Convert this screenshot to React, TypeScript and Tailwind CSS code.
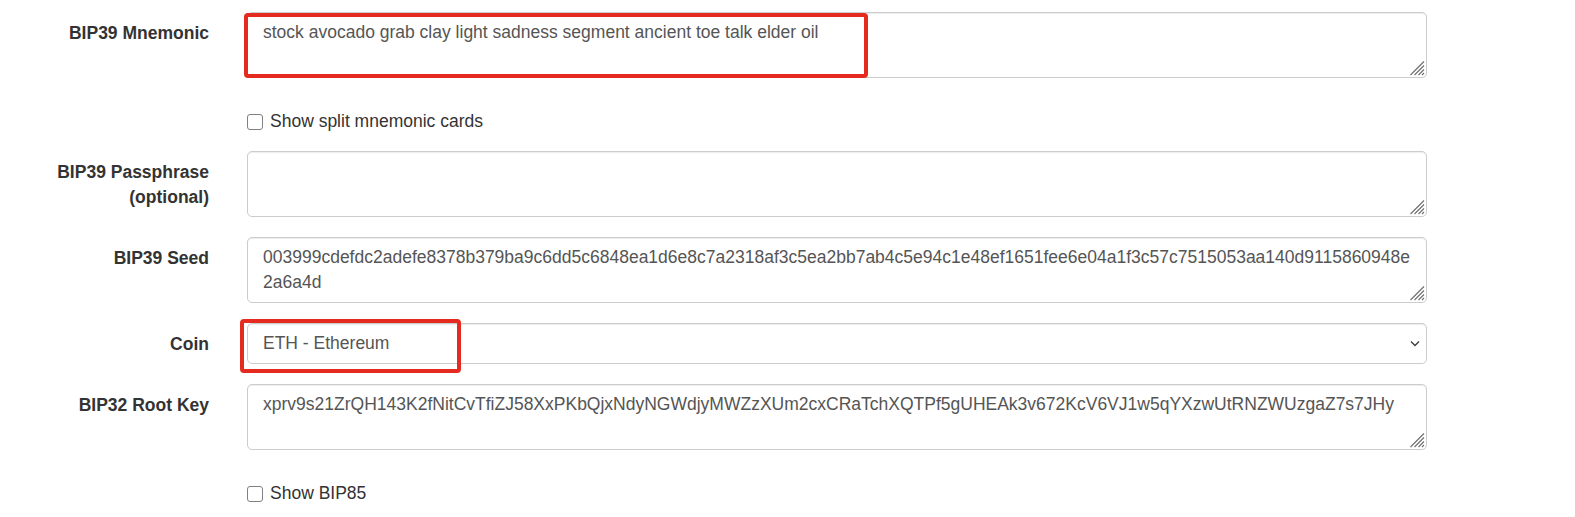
import React from 'react';

const FONT = { fontFamily: '"Liberation Sans", Arial, Helvetica, sans-serif' };

const SEED =
  '003999cdefdc2adefe8378b379ba9c6dd5c6848ea1d6e8c7a2318af3c5ea2bb7ab4c5e94c1e48ef1651fee6e04a1f3c57c7515053aa140d9115860948e2a6a4d';
const ROOT_KEY =
  'xprv9s21ZrQH143K2fNitCvTfiZJ58XxPKbQjxNdyNGWdjyMWZzXUm2cxCRaTchXQTPf5gUHEAk3v672KcV6VJ1w5qYXzwUtRNZWUzgaZ7s7JHy';

const fieldClass =
  'block w-full h-[66px] rounded-[5px] border border-[#ccc] bg-white pl-[15px] pr-[13px] py-[7px] text-[17.5px] leading-[25px] text-[#555] shadow-[inset_0_1px_1px_rgba(0,0,0,0.075)] outline-none resize-none';

function Row({ label, children }: { label: React.ReactNode; children: React.ReactNode }) {
  return (
    <div className="flex mb-5">
      <label className="w-[209px] shrink-0 pt-[9px] text-right text-[17.5px] leading-[25px] font-bold text-[#333]">
        {label}
      </label>
      <div className="relative ml-[38px] w-[1180px] shrink-0">{children}</div>
    </div>
  );
}

// textarea with a drawn resize grip in the corner
function Area({ value }: { value: string }) {
  return (
    <div className="relative">
      <textarea readOnly className={fieldClass} defaultValue={value} />
      <svg
        className="pointer-events-none absolute right-[2px] bottom-[2px]"
        width="16"
        height="16"
        viewBox="0 0 16 16"
        fill="none"
      >
        <path d="M15 1.5L1.5 15M15 5.5L5.5 15M15 9.5L9.5 15M15 13L13 15" stroke="#6e6e6e" strokeWidth="1.1" />
      </svg>
    </div>
  );
}

function CheckRow({ text }: { text: string }) {
  return (
    <div className="flex mb-5 h-[33px]">
      <div className="w-[209px] shrink-0" />
      <label className="ml-[38px] flex items-center gap-[6px] pt-[11px] h-[36px] text-[17.5px] leading-[25px] text-[#333]">
        <span className="block w-4 h-4 rounded-[3px] border-[1.5px] border-[#808080] bg-white" />
        <span className="pl-px">{text}</span>
      </label>
    </div>
  );
}

function RedBox({ className }: { className: string }) {
  return <div className={`pointer-events-none absolute rounded-[4px] border-[4px] border-[#e52a1f] ${className}`} />;
}

export default function App() {
  return (
    <div className="min-h-screen bg-white pt-3" style={FONT}>
      <Row label="BIP39 Mnemonic">
        <Area value="stock avocado grab clay light sadness segment ancient toe talk elder oil" />
        <RedBox className="left-[-3px] top-[1px] w-[624px] h-[65px]" />
      </Row>

      <CheckRow text="Show split mnemonic cards" />

      <Row
        label={
          <>
            <span className="block">BIP39 Passphrase</span>
            <span className="block">(optional)</span>
          </>
        }
      >
        <Area value="" />
      </Row>

      <Row label="BIP39 Seed">
        <Area value={SEED} />
      </Row>

      <Row label="Coin">
        <div className="relative">
          <select
            className="block w-full h-[41px] appearance-none rounded-[5px] border border-[#ccc] bg-white pl-[15px] pr-8 text-[17.5px] text-[#555] shadow-[inset_0_1px_1px_rgba(0,0,0,0.075)] outline-none"
            defaultValue="eth"
          >
            <option value="eth">ETH - Ethereum</option>
          </select>
          <svg
            className="pointer-events-none absolute right-[7px] top-[17px]"
            width="10"
            height="7"
            viewBox="0 0 10 7"
            fill="none"
          >
            <path d="M1 1.5l4 4 4-4" stroke="#3a3a3a" strokeWidth="1.3" />
          </svg>
        </div>
        <RedBox className="left-[-7px] top-[-4px] w-[221px] h-[54px]" />
      </Row>

      <Row label="BIP32 Root Key">
        <Area value={ROOT_KEY} />
      </Row>

      <CheckRow text="Show BIP85" />
    </div>
  );
}
